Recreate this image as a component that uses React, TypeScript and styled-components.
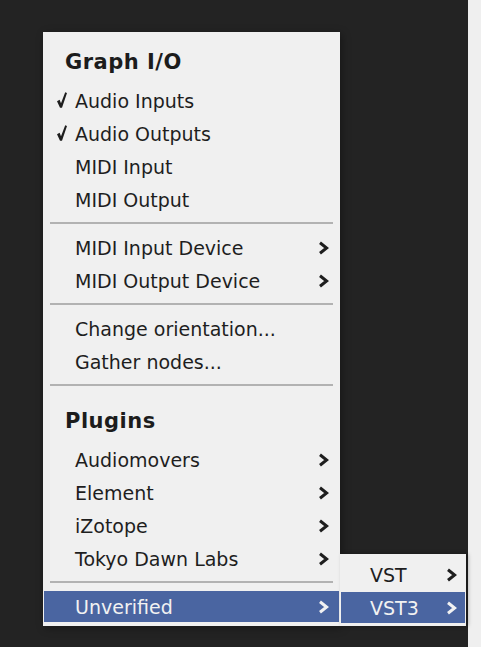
import React from 'react';
import styled, { createGlobalStyle } from 'styled-components';

const GlobalStyle = createGlobalStyle`
  html, body {
    margin: 0;
    padding: 0;
    background: #232323;
    font-family: "DejaVu Sans", Verdana, sans-serif;
  }
`;

const Page = styled.div`
  display: flex;
  width: 481px;
  height: 647px;
  overflow: hidden;
`;

const Canvas = styled.div`
  position: relative;
  flex: 1;
  background: #232323;
  padding: 32px 0 0 43px;
`;

const SideStrip = styled.div`
  width: 13px;
  background: #efefef;
`;

const Menu = styled.div`
  width: 297px;
  box-sizing: border-box;
  background: #f0f0f0;
  padding: 2px 0 3px;
  box-shadow: 2px 2px 8px rgba(0, 0, 0, 0.35);
`;

// popup that opens next to the highlighted item
const SubMenu = styled.div`
  position: absolute;
  left: 340px;
  top: 554px;
  width: 126px;
  box-sizing: border-box;
  background: #f0f0f0;
  padding: 4px 0 2px;
  box-shadow: 2px 0 4px rgba(0, 0, 0, 0.3);
`;

const Header = styled.div`
  height: 50px;
  box-sizing: border-box;
  padding: 16px 0 0 22px;
  font-size: 21px;
  font-weight: bold;
  letter-spacing: 0.5px;
  color: #1c1c1c;
  line-height: 24px;
`;

const Item = styled.div<{ $active?: boolean; $indent?: number }>`
  height: 33px;
  box-sizing: border-box;
  border: 1px solid transparent;
  background-clip: padding-box;
  display: flex;
  align-items: center;
  position: relative;
  padding-left: ${p => (p.$indent ?? 31)}px;
  padding-right: ${p => (p.$indent ? 8 : 10)}px;
  font-size: 19px;
  color: ${p => (p.$active ? '#f2f2f2' : '#1e1e1e')};
  background-color: ${p => (p.$active ? '#4a65a1' : 'transparent')};
`;

const Label = styled.span`
  flex: 1;
  white-space: nowrap;
`;

const CheckMark = styled.svg`
  position: absolute;
  left: 13px;
  top: 7px;
`;

const Separator = styled.div`
  height: 2px;
  margin: 6px 7px 7px;
  background: #b2b2b2;
`;

const Chevron = () => (
  <svg width="11" height="14" viewBox="0 0 11 14">
    <polyline
      points="2,1.8 8.6,7 2,12.2"
      fill="none"
      stroke="currentColor"
      strokeWidth="3"
    />
  </svg>
);

const Check = () => (
  <CheckMark width="10" height="16" viewBox="0 0 10 16">
    <polygon points="0,9.2 2.6,7.8 4,11.2 8.2,0.2 10,0.9 5,15.8 3,15.8" fill="#1e1e1e" />
  </CheckMark>
);

const MenuItem = ({ label, checked, sub, active, indent }: any) => (
  <Item $active={active} $indent={indent}>
    {checked && <Check />}
    <Label>{label}</Label>
    {sub && <Chevron />}
  </Item>
);

export default function App() {
  return (
    <Page>
      <GlobalStyle />
      <Canvas>
        <Menu>
          <Header>Graph I/O</Header>
          <MenuItem label="Audio Inputs" checked />
          <MenuItem label="Audio Outputs" checked />
          <MenuItem label="MIDI Input" />
          <MenuItem label="MIDI Output" />
          <Separator />
          <MenuItem label="MIDI Input Device" sub />
          <MenuItem label="MIDI Output Device" sub />
          <Separator />
          <MenuItem label="Change orientation..." />
          <MenuItem label="Gather nodes..." />
          <Separator />
          <Header>Plugins</Header>
          <MenuItem label="Audiomovers" sub />
          <MenuItem label="Element" sub />
          <MenuItem label="iZotope" sub />
          <MenuItem label="Tokyo Dawn Labs" sub />
          <Separator />
          <MenuItem label="Unverified" sub active />
        </Menu>
        <SubMenu>
          <MenuItem label="VST" sub indent={29} />
          <MenuItem label="VST3" sub active indent={29} />
        </SubMenu>
      </Canvas>
      <SideStrip />
    </Page>
  );
}
